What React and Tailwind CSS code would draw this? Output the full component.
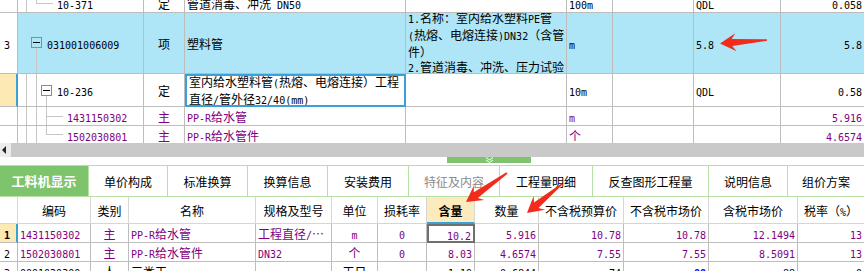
import React from 'react';

const MONO = "[font-family:'DejaVu_Sans_Mono',monospace] text-[10px]";
const CJK = "[font-family:'Noto_Sans_CJK_SC',sans-serif] text-[12px]";

const CELL = 'flex items-center min-w-0 overflow-hidden whitespace-nowrap';
const GRIDLINE = 'border-r border-b border-[#bdbdbd]';
const LASTLINE = 'border-b border-[#bdbdbd]';
const TOP_GRID = 'grid grid-cols-[18px_126px_41px_221px_161px_46px_81px_87px_83px]';
const BOT_GRID = 'grid grid-cols-[18px_73px_38px_127px_76px_46px_49px_48px_64px_85px_85px_89px_66px]';

const AL = { l: 'justify-start pl-[2px]', c: 'justify-center', r: 'justify-end pr-[2px]', n: '' };

// split text into ascii (half width) and cjk runs
const Txt = ({ s }) => {
  const parts = s.match(/[\x20-\x7e]+|[^\x20-\x7e]+/g) || [];
  return (
    <span className="whitespace-pre">
      {parts.map((p, i) => (
        <span key={i} className={/^[\x20-\x7e]/.test(p) ? MONO : CJK}>{p}</span>
      ))}
    </span>
  );
};

const Tree = ({ w, h, children }) => (
  <svg width={w} height={h} className="shrink-0" stroke="#c6c6c6" strokeWidth="1" fill="none" shapeRendering="crispEdges">
    {children}
  </svg>
);

const Box = ({ x, y }) => (
  <g>
    <rect x={x + 0.5} y={y + 0.5} width="10" height="10" fill="none" stroke="#8c8c8c" />
    <line x1={x + 2} x2={x + 9} y1={y + 5.5} y2={y + 5.5} stroke="#000" />
  </g>
);

const TopRow = ({ h, head, cells, rowBg = 'bg-white', color = 'text-black' }) => (
  <div className={`${TOP_GRID} ${h}`}>
    {head}
    {cells.map((c, i) => (
      <div
        key={i}
        className={`${CELL} ${c.line || (i === cells.length - 1 ? LASTLINE : GRIDLINE)} ${c.bg || rowBg} ${AL[c.a || 'n']} ${c.color || color}`}
      >
        {c.tree}
        {c.t !== undefined && <Txt s={c.t} />}
        {c.node}
      </div>
    ))}
  </div>
);

const Head = ({ t = '', sel = false }) => (
  <div
    className={`${CELL} pl-[4px] ${
      sel ? 'bg-[#fde9b3] border-b border-[#bdbdbd] border-r-2 border-r-[#3aa0d8]' : 'bg-white border-r border-b border-[#bdbdbd]'
    }`}
  >
    <Txt s={t} />
  </div>
);

const ALIGN_B = ['n', 'l', 'c', 'l', 'l', 'c', 'c', 'r', 'r', 'r', 'r', 'r', 'r'];

const BotRow = ({ h, vals, color = 'text-black', sel = false, extra = {} }) => (
  <div className={`${BOT_GRID} ${h}`}>
    {vals.map((v, i) => {
      const e = extra[i] || {};
      let line = i === vals.length - 1 ? LASTLINE : GRIDLINE;
      let bg = 'bg-white';
      let al = AL[ALIGN_B[i]];
      if (i === 0) {
        al = 'justify-start pl-[4px]';
        if (sel) {
          line = 'border-b border-[#bdbdbd] border-r-2 border-r-[#3aa0d8]';
          bg = 'bg-[#fde9b3]';
        }
      }
      return (
        <div key={i} className={`${CELL} ${e.line || line} ${bg} ${al} ${e.color || (i === 0 ? 'text-black' : color)} ${e.cls || ''}`}>
          <Txt s={v} />
        </div>
      );
    })}
  </div>
);

const HEADERS = ['', '编码', '类别', '名称', '规格及型号', '单位', '损耗率', '含量', '数量', '不含税预算价', '不含税市场价', '含税市场价', '税率（%）'];

const TABS = [
  ['工料机显示', 'w-[89px]'],
  ['单价构成', 'w-[79px]'],
  ['标准换算', 'w-[80px]'],
  ['换算信息', 'w-[80px]'],
  ['安装费用', 'w-[81px]'],
  ['特征及内容', 'w-[91px]'],
  ['工程量明细', 'w-[93px]'],
  ['反查图形工程量', 'w-[116px]'],
  ['说明信息', 'w-[79px]'],
  ['组价方案', 'w-[76px]'],
];

const arrowPoints = (tx, ty, hx, hy) => {
  const dx = hx - tx;
  const dy = hy - ty;
  const len = Math.hypot(dx, dy);
  const ux = dx / len;
  const uy = dy / len;
  const nx = -uy;
  const ny = ux;
  const p = (back, side) => `${(hx - ux * back + nx * side).toFixed(1)},${(hy - uy * back + ny * side).toFixed(1)}`;
  return [p(0, 0), p(16, 9), p(12, 3.5), p(len, 0.8), p(len, -0.8), p(12, -3.5), p(16, -9)].join(' ');
};

export default function App() {
  const purple = 'text-[#800080]';

  return (
    <div className="relative w-[864px] h-[271px] overflow-hidden bg-white text-black select-none">
      {/* upper grid, scrolled a few px */}
      <div className="h-[143px] overflow-hidden">
        <div className="-mt-[6px]">
          <TopRow
            h="h-[19px]"
            head={<Head />}
            cells={[
              {
                tree: (
                  <Tree w={39} h={18}>
                    <line x1="8.5" y1="0" x2="8.5" y2="18" />
                    <line x1="18.5" y1="0" x2="18.5" y2="9.5" />
                    <line x1="18.5" y1="9.5" x2="35" y2="9.5" />
                  </Tree>
                ),
                t: '10-371',
              },
              { t: '定', a: 'c' },
              { t: '管道消毒、冲洗 DN50', a: 'l' },
              {},
              { t: '100m', a: 'l' },
              {},
              { t: 'QDL', a: 'l' },
              { t: '0.058', a: 'r' },
            ]}
          />
          <TopRow
            h="h-[61px]"
            rowBg="bg-[#aee6f8]"
            head={<Head t="3" />}
            cells={[
              {
                tree: (
                  <Tree w={29} h={60}>
                    <Box x={13} y={24} />
                    <line x1="18.5" y1="35" x2="18.5" y2="60" />
                  </Tree>
                ),
                t: '031001006009',
              },
              { t: '项', a: 'c' },
              { t: '塑料管', a: 'l' },
              {
                a: 'l',
                node: (
                  <div className="leading-[14px] -mt-[1px]">
                    <div><Txt s="1.名称：室内给水塑料PE管" /></div>
                    <div><Txt s="(热熔、电熔连接)DN32（含管" /></div>
                    <div><Txt s="件）" /></div>
                    <div><Txt s="2.管道消毒、冲洗、压力试验" /></div>
                  </div>
                ),
              },
              { t: 'm', a: 'l' },
              {},
              { t: '5.8', a: 'l' },
              { t: '5.8', a: 'r' },
            ]}
          />
          <TopRow
            h="h-[33px]"
            head={<Head sel />}
            cells={[
              {
                tree: (
                  <Tree w={39} h={32}>
                    <line x1="8.5" y1="0" x2="8.5" y2="32" />
                    <line x1="18.5" y1="0" x2="18.5" y2="32" />
                    <Box x={23} y={11} />
                    <line x1="28.5" y1="22" x2="28.5" y2="32" />
                  </Tree>
                ),
                t: '10-236',
              },
              { t: '定', a: 'c' },
              {
                a: 'l',
                line: 'border-2 border-[#3aa0d8]',
                node: (
                  <div className="leading-[14px] pt-[1px]">
                    <div><Txt s="室内给水塑料管(热熔、电熔连接）工程" /></div>
                    <div><Txt s="直径/管外径32/40(mm)" /></div>
                  </div>
                ),
              },
              {},
              { t: '10m', a: 'l' },
              {},
              { t: 'QDL', a: 'l' },
              { t: '0.58', a: 'r' },
            ]}
          />
          <TopRow
            h="h-[19px]"
            color={purple}
            head={<Head />}
            cells={[
              {
                tree: (
                  <Tree w={49} h={18}>
                    <line x1="8.5" y1="0" x2="8.5" y2="18" />
                    <line x1="18.5" y1="0" x2="18.5" y2="18" />
                    <line x1="28.5" y1="0" x2="28.5" y2="18" />
                    <line x1="28.5" y1="9.5" x2="45" y2="9.5" />
                  </Tree>
                ),
                t: '1431150302',
              },
              { t: '主', a: 'c' },
              { t: 'PP-R给水管', a: 'l' },
              {},
              { t: 'm', a: 'l' },
              {},
              {},
              { t: '5.916', a: 'r' },
            ]}
          />
          <TopRow
            h="h-[19px]"
            color={purple}
            head={<Head />}
            cells={[
              {
                tree: (
                  <Tree w={49} h={18}>
                    <line x1="8.5" y1="0" x2="8.5" y2="18" />
                    <line x1="18.5" y1="0" x2="18.5" y2="18" />
                    <line x1="28.5" y1="0" x2="28.5" y2="8.5" />
                    <line x1="28.5" y1="8.5" x2="45" y2="8.5" />
                  </Tree>
                ),
                t: '1502030801',
              },
              { t: '主', a: 'c' },
              { t: 'PP-R给水管件', a: 'l' },
              {},
              { t: '个', a: 'l' },
              {},
              {},
              { t: '4.6574', a: 'r' },
            ]}
          />
        </div>
      </div>

      {/* horizontal scrollbar */}
      <div className="flex h-[14px]">
        <div className="w-[11px] bg-[#ececec] flex items-center pl-[2px]">
          <svg width="5" height="8">
            <polygon points="4,0 4,8 0,4" fill="#222" />
          </svg>
        </div>
        <div className="flex-1 bg-[#c9c9c9]" />
      </div>

      {/* splitter */}
      <div className="h-[8px] flex">
        <div className="ml-[447px] w-[84px] h-[6px] bg-[#7ec46c] flex items-center justify-center">
          <svg width="9" height="6" fill="none" stroke="#fff" strokeWidth="1">
            <polyline points="1,0.5 4.5,3 8,0.5" />
            <polyline points="1,3 4.5,5.5 8,3" />
          </svg>
        </div>
      </div>

      {/* tabs */}
      <div className="flex h-[32px] border-y border-[#b6e0a6]">
        {TABS.map(([label, w], i) => (
          <div
            key={label}
            className={`${w} shrink-0 flex items-center justify-center ${i === TABS.length - 1 ? '' : 'border-r border-[#b6e0a6]'} ${
              i === 0 ? 'bg-[#7ec46c] text-white' : i === 5 ? 'text-[#8a8a8a]' : 'text-black'
            }`}
          >
            {i === 0 ? (
              <span className="[font-family:'Noto_Sans_CJK_SC',sans-serif] text-[13px] font-bold">{label}</span>
            ) : (
              <Txt s={label} />
            )}
          </div>
        ))}
      </div>

      {/* lower grid */}
      <div className={`${BOT_GRID} h-[27px]`}>
        {HEADERS.map((hd, i) => (
          <div
            key={i}
            className={`${CELL} justify-center ${
              i === 7
                ? 'bg-[#fdebbd] border-r border-[#d6d6d6] border-b-2 border-b-[#3aa0d8] font-bold'
                : i === HEADERS.length - 1
                ? 'bg-white border-b border-[#d6d6d6]'
                : 'bg-white border-r border-b border-[#d6d6d6]'
            }`}
          >
            <Txt s={hd} />
          </div>
        ))}
      </div>
      <BotRow
        h="h-[19px]"
        sel
        color={purple}
        vals={['1', '1431150302', '主', 'PP-R给水管', '工程直径/…', 'm', '0', '10.2', '5.916', '10.78', '10.78', '12.1494', '13']}
        extra={{ 0: { cls: 'font-bold' }, 7: { line: 'border-2 border-[#707070]' } }}
      />
      <BotRow
        h="h-[19px]"
        color={purple}
        vals={['2', '1502030801', '主', 'PP-R给水管件', 'DN32', '个', '0', '8.03', '4.6574', '7.55', '7.55', '8.5091', '13']}
      />
      <BotRow
        h="h-[19px]"
        vals={['3', '0001030300', '人', '三类工', '', '工日', '', '1.19', '0.6844', '74', '88', '88', '0']}
        extra={{ 10: { color: 'text-[#0000ff]', cls: 'font-bold' } }}
      />

      {/* red annotation arrows */}
      <svg className="absolute left-0 top-0 pointer-events-none" width="864" height="271">
        <polygon points={arrowPoints(767, 40, 720, 43.5)} fill="#f22b1c" />
        <polygon points={arrowPoints(507, 173, 466, 202)} fill="#f22b1c" />
        <polygon points={arrowPoints(562, 184, 527, 213)} fill="#f22b1c" />
      </svg>
    </div>
  );
}
